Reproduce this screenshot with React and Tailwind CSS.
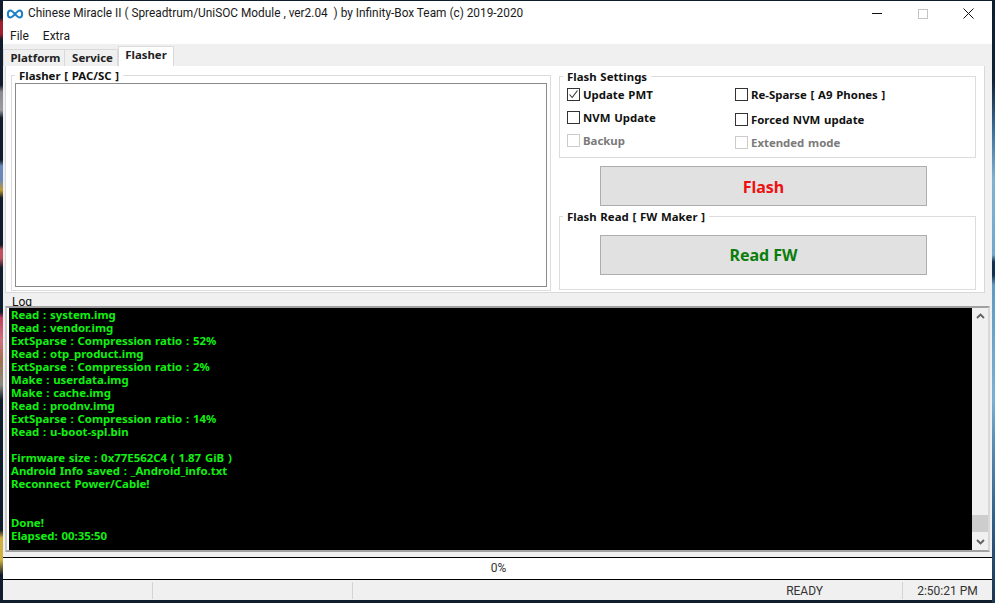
import React from "react";

const ui = { fontFamily: 'Roboto, "Open Sans", sans-serif' };
const tah = { fontFamily: '"Noto Sans", "Liberation Sans", sans-serif' };

const logLines = [
  "Read : system.img",
  "Read : vendor.img",
  "ExtSparse : Compression ratio : 52%",
  "Read : otp_product.img",
  "ExtSparse : Compression ratio : 2%",
  "Make : userdata.img",
  "Make : cache.img",
  "Read : prodnv.img",
  "ExtSparse : Compression ratio : 14%",
  "Read : u-boot-spl.bin",
  "",
  "Firmware size : 0x77E562C4 ( 1.87 GiB )",
  "Android Info saved : _Android_info.txt",
  "Reconnect Power/Cable!",
  "",
  "",
  "Done!",
  "Elapsed: 00:35:50",
];

function Check({ label, checked, disabled, className = "" }) {
  return (
    <div className={"flex items-center gap-[3px] h-[13px] " + className}>
      <span className={"w-[13px] h-[13px] border flex items-center justify-center bg-white " + (disabled ? "border-[#cccccc]" : "border-[#333333]")}>
        {checked && (
          <svg width="11" height="11" viewBox="0 0 11 11">
            <path d="M1.5 5.5 L4.2 8.5 L9.5 1.5" fill="none" stroke="#333" strokeWidth="1.1" />
          </svg>
        )}
      </span>
      <span className={"text-[11.4px] font-bold leading-[13px] [word-spacing:0.8px] whitespace-nowrap " + (disabled ? "text-[#7a7a7a]" : "text-[#111111]")}>{label}</span>
    </div>
  );
}

function Legend({ children, className = "" }) {
  return (
    <span className={"absolute top-[-7px] left-[3px] bg-white px-[4px] text-[11.4px] font-bold leading-[13px] text-[#111111] [word-spacing:0.8px] whitespace-nowrap " + className}>
      {children}
    </span>
  );
}

export default function App() {
  return (
    <div className="relative w-[995px] h-[603px] bg-[#0f1d2c] overflow-hidden pt-[1px] pl-[3px] pr-[3px]">
      <div className="absolute left-0 top-0 w-[3px] h-[603px] bg-[linear-gradient(to_bottom,#0f1d2c_0,#0f1d2c_18px,#a02030_22px,#a02030_34px,#0f1d2c_40px,#0f1d2c_85px,#8a8a90_92px,#9a9a9f_110px,#0f1d2c_118px,#0f1d2c_160px,#6a88b8_166px,#6a88b8_180px,#c09a30_190px,#0f1d2c_198px,#0f1d2c_245px,#c05060_250px,#c05060_258px,#0f1d2c_268px,#0f1d2c_312px,#c04060_318px,#d07080_340px,#a07050_360px,#8a8a80_385px,#0f1d2c_400px,#0f1d2c_530px,#d0b040_538px,#d0b040_560px,#0f1d2c_575px)]" />
      <div className="absolute right-0 top-0 w-[3px] h-[603px] bg-[linear-gradient(to_bottom,#0f1d2c_0,#0f2438_80px,#3a6f9c_130px,#7fb2d2_180px,#6fa8cc_255px,#12304f_262px,#12304f_275px,#5f9ac4_285px,#7ab0d4_400px,#5a8fb8_440px,#2f5f8a_520px,#1a3552_603px)]" />
      <div className="relative w-[989px] h-[599px] bg-[#f0f0f0] flex flex-col" style={tah}>
        {/* title bar */}
        <div className="h-[25px] bg-white flex items-center shrink-0 pl-[3px]">
          <svg width="18" height="10" viewBox="0 0 18 10" className="mr-[3px]">
            <path d="M4.5 1.5 C1 1.5 1 8.5 4.5 8.5 C7 8.5 11 1.5 13.5 1.5 C17 1.5 17 8.5 13.5 8.5 C11 8.5 7 1.5 4.5 1.5 Z" fill="none" stroke="#1f7fc4" strokeWidth="2" />
          </svg>
          <span className="text-[11.85px] text-[#1a1a1a] whitespace-nowrap pl-[1px]" style={ui}>
            Chinese Miracle II ( Spreadtrum/UniSOC Module , ver2.04&nbsp; ) by Infinity-Box Team (c) 2019-2020
          </span>
          <div className="ml-auto flex items-center">
            <span className="w-[10px] h-[1px] bg-[#111111] mr-[36px]" />
            <span className="w-[10px] h-[10px] border border-[#c4c4c4] mr-[35px]" />
            <svg width="11" height="11" viewBox="0 0 11 11" className="mr-[18px]">
              <path d="M0.5 0.5 L10.5 10.5 M10.5 0.5 L0.5 10.5" stroke="#111" strokeWidth="1" />
            </svg>
          </div>
        </div>
        {/* menu */}
        <div className="h-[18px] bg-white flex items-center shrink-0 pl-[7px] pt-[2px] gap-[14px] text-[12px] text-[#1a1a1a]" style={ui}>
          <span>File</span>
          <span>Extra</span>
        </div>
        {/* tabs */}
        <div className="h-[22px] flex items-end shrink-0 text-[11.4px] font-bold text-[#222222]">
          <div className="w-[62px] h-[17px] bg-[#f0f0f0] border border-b-0 border-[#d9d9d9] flex items-center justify-center pl-[3px] leading-none">Platform</div>
          <div className="w-[53px] h-[17px] bg-[#f0f0f0] border border-b-0 border-l-0 border-[#d9d9d9] flex items-center justify-center pl-[3px] leading-none">Service</div>
          <div className="w-[56px] h-[20px] bg-white border border-b-0 border-[#d9d9d9] flex items-start pt-[1px] justify-center leading-[14px]">Flasher</div>
        </div>
        {/* panel */}
        <div className="h-[227px] mx-[2px] w-[980px] bg-white border border-t-0 border-[#d9d9d9] shrink-0 flex pt-[9px] pl-[5px]">
          <div className="relative w-[540px] h-[216px] border border-[#dcdcdc] p-[3px] pt-[7px] mr-[8px]">
            <Legend>Flasher [ PAC/SC ]</Legend>
            <div className="w-full h-[204px] bg-white border border-[#8a8a8a]" />
          </div>
          <div className="w-[417px] flex flex-col pt-[1px]">
            <div className="relative h-[82px] border border-[#dcdcdc]">
              <Legend>Flash Settings</Legend>
              <div className="flex pl-[7px] pt-[11px]">
                <div className="w-[168px] flex flex-col gap-[10px]">
                  <Check label="Update PMT" checked />
                  <Check label="NVM Update" />
                  <Check label="Backup" disabled />
                </div>
                <div className="flex flex-col gap-[10px]">
                  <Check label="Re-Sparse [ A9 Phones ]" className="mb-[2px]" />
                  <Check label="Forced NVM update" />
                  <Check label="Extended mode" disabled />
                </div>
              </div>
            </div>
            <button className="w-[327px] h-[40px] ml-[41px] mt-[8px] pt-[1px] bg-[#e1e1e1] border border-[#adadad] text-[16px] font-bold text-[#ee1111] flex items-center justify-center">Flash</button>
            <div className="relative h-[74px] mt-[10px] border border-[#dcdcdc] pt-[18px] pl-[40px]">
              <Legend>Flash Read [ FW Maker ]</Legend>
              <button className="w-[327px] h-[40px] bg-[#e1e1e1] border border-[#adadad] text-[16px] font-bold text-[#0a7d0a] flex items-center justify-center">Read FW</button>
            </div>
          </div>
        </div>
        {/* log */}
        <div className="h-[11px] mt-[2px] pl-[9px] text-[12px] leading-[14px] text-[#111111] shrink-0 overflow-hidden" style={ui}>Log</div>
        <div className="h-[246px] w-[985px] ml-[2px] border-2 border-[#a0a0a0] border-r-[#d8d8d8] border-l-[#c8c8c8] shrink-0 flex bg-white pl-[2px]">
          <div className="flex-1 bg-black pl-[2px] overflow-hidden text-[11.4px] font-bold leading-[13px] text-[#11f011] [word-spacing:0.8px]">
            {logLines.map((l, i) => (
              <div key={i} className="h-[13px] whitespace-nowrap">{l}</div>
            ))}
          </div>
          <div className="w-[16px] bg-[#f0f0f0] flex flex-col items-center justify-between py-[5px] relative">
            <svg width="9" height="6" viewBox="0 0 9 6">
              <path d="M1 5 L4.5 1.5 L8 5" fill="none" stroke="#606060" strokeWidth="1.8" />
            </svg>
            <span className="absolute bottom-[18px] left-0 w-[16px] h-[17px] bg-[#cdcdcd]" />
            <svg width="9" height="6" viewBox="0 0 9 6">
              <path d="M1 1 L4.5 4.5 L8 1" fill="none" stroke="#606060" strokeWidth="1.8" />
            </svg>
          </div>
        </div>
        {/* progress */}
        <div className="h-[23px] mt-[5px] bg-white border-y border-black shrink-0 flex items-center justify-center pl-[2px] pb-[2px] text-[12px] text-[#333333]" style={ui}>0%</div>
        {/* status */}
        <div className="flex-1 flex items-center pt-[1px] text-[12px] text-[#333333]" style={ui}>
          <div className="w-[150px] h-[17px] border-r border-[#d4d4d4]" />
          <div className="w-[200px] h-[17px] border-r border-[#d4d4d4]" />
          <div className="w-[550px] h-[17px] border-r border-[#d4d4d4] flex items-center justify-end pr-[79px] leading-none">READY</div>
          <div className="flex-1 text-center leading-none">2:50:21 PM</div>
        </div>
      </div>
    </div>
  );
}
